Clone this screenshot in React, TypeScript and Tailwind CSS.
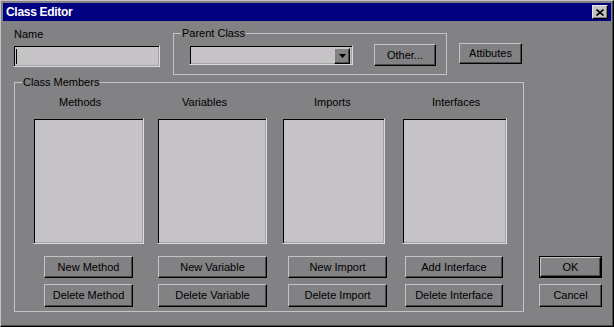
const raised =
  "border border-t-[#c6c3c6] border-l-[#c6c3c6] border-r-black border-b-black bg-[#828183] shadow-[inset_-1px_-1px_0_#4a494b]"
const sunken =
  "border border-t-[#828183] border-l-[#828183] border-r-[#dedbde] border-b-[#dedbde] bg-[#c6c3c6] shadow-[inset_1px_1px_0_#000,inset_-1px_-1px_0_#a5a2a5]"

function Btn({ label, className = "" }: { label: string; className?: string }) {
  return (
    <button type="button" className={`${raised} flex items-center justify-center text-black ${className}`}>
      {label}
    </button>
  )
}

const columns = [
  {
    title: "Methods",
    col: "ml-[18px] w-[111px]",
    label: "ml-[26px]",
    btn: "ml-[11px] w-[89px]",
    add: "New Method",
    del: "Delete Method",
  },
  {
    title: "Variables",
    col: "ml-[13px] w-[110px]",
    label: "ml-[25px]",
    btn: "ml-[1px] w-[109px]",
    add: "New Variable",
    del: "Delete Variable",
  },
  {
    title: "Imports",
    col: "ml-[15px] w-[103px]",
    label: "ml-[32px]",
    btn: "ml-[6px] w-[99px]",
    add: "New Import",
    del: "Delete Import",
  },
  {
    title: "Interfaces",
    col: "ml-[17px] w-[105px]",
    label: "ml-[30px]",
    btn: "ml-[3px] w-[98px]",
    add: "Add Interface",
    del: "Delete Interface",
  },
]

export default function App() {
  return (
    <div className="w-[614px] h-[327px] overflow-hidden bg-[#828183] border border-t-[#c6c3c6] border-l-[#c6c3c6] border-r-black border-b-black shadow-[inset_-1px_-1px_0_#4a494b] p-[2px] font-['Liberation_Sans',Arial,sans-serif] text-[11px] leading-[13px] text-black">
      {/* title bar */}
      <div className="h-[18px] bg-[#000080] flex items-center justify-between pl-[3px] pr-[3px]">
        <span className="text-white font-bold text-[12px] leading-[14px] tracking-[-0.3px]">Class Editor</span>
        <div className="w-[16px] h-[14px] border border-t-[#e8e8e8] border-l-[#e8e8e8] border-r-black border-b-black bg-[#c6c3c6] shadow-[inset_-1px_-1px_0_#828183] flex items-center justify-center">
          <svg width="8" height="7" viewBox="0 0 8 7">
            <path d="M0.5 0.5 L7.5 6.5 M7.5 0.5 L0.5 6.5" stroke="#000" strokeWidth="1.6" />
          </svg>
        </div>
      </div>

      <div className="flex h-[303px]">
        {/* left column */}
        <div className="ml-[10px] w-[511px] pt-[6px] flex flex-col">
          <div className="flex items-start">
            <div className="w-[147px] mt-[1px]">
              <div className="ml-[1px]">Name</div>
              <div className={`${sunken} mt-[4px] h-[22px] flex items-center`}>
                <span className="ml-[2px] w-px h-[15px] bg-black" />
              </div>
            </div>

            <fieldset className="ml-[13px] w-[274px] h-[48px] border border-[#c6c3c6]">
              <legend className="ml-[7px] px-[1px] leading-[13px]">Parent Class</legend>
              <div className="flex items-start pt-[5px]">
                <div className={`${sunken} ml-[15px] w-[164px] h-[20px] flex justify-end p-[2px]`}>
                  <div className="w-[16px] h-[16px] border border-t-[#c6c3c6] border-l-[#c6c3c6] border-r-black border-b-black bg-[#828183] shadow-[inset_-1px_-1px_0_#4a494b] flex items-center justify-center">
                    <svg width="7" height="4" viewBox="0 0 7 4">
                      <path d="M0 0 H7 L3.5 4 Z" fill="#000" />
                    </svg>
                  </div>
                </div>
                <Btn label="Other..." className="ml-[21px] -mt-[1px] w-[62px] h-[22px]" />
              </div>
            </fieldset>

            <Btn label="Attibutes" className="ml-[12px] mt-[16px] w-[63px] h-[21px]" />
          </div>

          <fieldset className="ml-[1px] mt-[1px] w-[510px] h-[236px] border border-[#c6c3c6]">
            <legend className="ml-[7px] px-[1px] leading-[13px]">Class Members</legend>
            <div className="flex pt-[7px]">
              {columns.map((c) => (
                <div key={c.title} className={`${c.col} flex flex-col items-start`}>
                  <div className={c.label}>{c.title}</div>
                  <div className={`${sunken} mt-[9px] w-full h-[126px]`} />
                  <Btn label={c.add} className={`${c.btn} mt-[12px] h-[22px]`} />
                  <Btn label={c.del} className={`${c.btn} mt-[6px] h-[23px]`} />
                </div>
              ))}
            </div>
          </fieldset>
        </div>

        {/* right column */}
        <div className="ml-[15px] w-[63px] flex flex-col justify-end pb-[17px]">
          <div className="h-[22px] border border-black flex">
            <Btn label="OK" className="w-full h-full" />
          </div>
          <Btn label="Cancel" className="mt-[6px] h-[23px] w-full" />
        </div>
      </div>
    </div>
  )
}
